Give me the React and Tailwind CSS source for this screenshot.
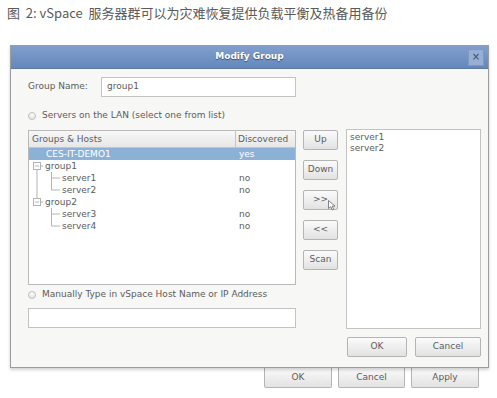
import React from "react";

function Btn({ children, className = "" }) {
  return (
    <div
      className={`relative flex items-center justify-center rounded-[2px] border border-[#b4b4b4] bg-linear-to-b from-[#fbfbfb] to-[#e2e2e2] text-[9px] text-[#5c5c5c] ${className}`}
    >
      {children}
    </div>
  );
}

function Radio() {
  return (
    <span className="mr-[6px] inline-block h-[8px] w-[8px] rounded-full border border-[#bcbcbc] bg-linear-to-b from-[#fdfdfd] to-[#e6e6e6]" />
  );
}

// tree connectors, one small drawing per row
function Tree({ kind }) {
  const c = "#b3b3b3";
  const isGroup = kind === "group1" || kind === "group2";
  return (
    <svg width={isGroup ? 16 : 33} height="12" className="shrink-0">
      {isGroup && (
        <>
          {kind === "group2" && <line x1="8" y1="0" x2="8" y2="2.5" stroke={c} />}
          <rect x="4.5" y="2.5" width="7" height="7" fill="white" stroke={c} />
          <line x1="6" y1="6" x2="10" y2="6" stroke={c} />
          {kind === "group1" && <line x1="8" y1="9.5" x2="8" y2="12" stroke={c} />}
          <line x1="11.5" y1="6" x2="14" y2="6" stroke={c} />
        </>
      )}
      {(kind === "mid1" || kind === "last1") && (
        <line x1="8" y1="0" x2="8" y2="12" stroke={c} />
      )}
      {(kind === "mid1" || kind === "mid2") && (
        <line x1="22.5" y1="0" x2="22.5" y2="12" stroke={c} />
      )}
      {(kind === "last1" || kind === "last2") && (
        <line x1="22.5" y1="0" x2="22.5" y2="6" stroke={c} />
      )}
      {!isGroup && <line x1="22.5" y1="6" x2="31" y2="6" stroke={c} />}
    </svg>
  );
}

const rows = [
  { name: "group1", tree: "group1", disc: "" },
  { name: "server1", tree: "mid1", disc: "no" },
  { name: "server2", tree: "last1", disc: "no" },
  { name: "group2", tree: "group2", disc: "" },
  { name: "server3", tree: "mid2", disc: "no" },
  { name: "server4", tree: "last2", disc: "no" },
];

export default function App() {
  return (
    <div className="h-[398px] w-[497px] overflow-hidden bg-white font-['DejaVu_Sans',sans-serif]">
      <div className="h-[45px] whitespace-pre pl-[7px] pt-[4px] font-['Noto_Sans_CJK_SC',sans-serif] text-[13px] leading-[18px] text-[#5a5a5a]">
        图  2: vSpace  服务器群可以为灾难恢复提供负载平衡及热备用备份
      </div>

      <div className="relative z-10 ml-[10px] w-[479px] border border-[#9c9c9c] bg-[#f7f7f5] shadow-[0_2px_3px_rgba(0,0,0,0.18)]">
        <div className="grid h-[23px] grid-cols-[20px_1fr_20px] items-center border-b border-[#5b7ba3] bg-linear-to-b from-[#819fcd] to-[#6587bb]">
          <div />
          <div className="text-center text-[9px] font-bold text-white [text-shadow:0_1px_1px_rgba(0,0,0,0.45)]">
            Modify Group
          </div>
          <div className="flex h-[17px] w-[16px] items-center justify-center border border-[#7f98c0] bg-[#97afd4] text-[10px] leading-none text-[#4a4a4a]">
            ×
          </div>
        </div>

        <div className="pb-[10px] pl-[17px] pr-[7px] pt-[8px] text-[9px] text-[#5c5c5c]">
          <div className="flex h-[20px] items-center">
            <div className="w-[73px]">Group Name:</div>
            <div className="flex h-[20px] w-[195px] items-center border border-[#c3c3c3] bg-white pl-[5px]">
              group1
            </div>
          </div>

          <div className="mb-[7px] mt-[13px] flex h-[12px] items-center">
            <Radio />
            <span>Servers on the LAN (select one from list)</span>
          </div>

          <div className="flex items-start">
            <div className="w-[268px]">
              <div className="mt-[1px] h-[155px] border border-[#b9b9b9] bg-white">
                <div className="flex h-[17px] border-b border-[#c4c4c4] bg-linear-to-b from-[#f7f7f7] to-[#e7e7e7] leading-[16px]">
                  <div className="w-[207px] border-r border-[#c4c4c4] pl-[3px]">Groups &amp; Hosts</div>
                  <div className="pl-[2px]">Discovered</div>
                </div>
                <div className="flex h-[12px] bg-[#8cb1d6] leading-[12px] text-white">
                  <div className="w-[207px] pl-[17px]">CES-IT-DEMO1</div>
                  <div className="pl-[3px]">yes</div>
                </div>
                {rows.map((r) => (
                  <div key={r.name} className="flex h-[12px] leading-[12px]">
                    <div className="flex w-[207px]">
                      <Tree kind={r.tree} />
                      <span>{r.name}</span>
                    </div>
                    <div className="pl-[3px]">{r.disc}</div>
                  </div>
                ))}
              </div>

              <div className="mt-[4px] flex h-[12px] items-center">
                <Radio />
                <span>Manually Type in vSpace Host Name or IP Address</span>
              </div>
              <div className="mt-[7px] h-[20px] border border-[#c3c3c3] bg-white" />
            </div>

            <div className="ml-[7px] mt-[1px] flex w-[35px] flex-col gap-[10px]">
              <Btn className="h-[20px] border-[#9a9a9a]">Up</Btn>
              <Btn className="h-[20px]">Down</Btn>
              <Btn className="h-[20px]">
                &gt;&gt;
                <svg width="8" height="11" className="absolute left-[24px] top-[9px]">
                  <path d="M0.5 0.5 L0.5 8.5 L2.7 6.6 L4.2 10 L5.6 9.4 L4.2 6.1 L7 6.1 Z" fill="white" stroke="#666" strokeWidth="0.8" />
                </svg>
              </Btn>
              <Btn className="h-[20px]">&lt;&lt;</Btn>
              <Btn className="h-[20px]">Scan</Btn>
            </div>

            <div className="ml-[8px] w-[135px]">
              <div className="h-[200px] border border-[#c3c3c3] bg-white pl-[3px] pt-[2px] leading-[11px]">
                <div>server1</div>
                <div>server2</div>
              </div>
              <div className="mt-[8px] flex justify-end gap-[8px]">
                <Btn className="h-[20px] w-[60px]">OK</Btn>
                <Btn className="h-[20px] w-[66px]">Cancel</Btn>
              </div>
            </div>
          </div>
        </div>
      </div>

      <div className="flex gap-[6px] pl-[264px]">
        <Btn className="h-[20px] w-[68px] rounded-t-none border-t-0">OK</Btn>
        <Btn className="h-[20px] w-[67px] rounded-t-none border-t-0">Cancel</Btn>
        <Btn className="h-[20px] w-[68px] rounded-t-none border-t-0">Apply</Btn>
      </div>
    </div>
  );
}
